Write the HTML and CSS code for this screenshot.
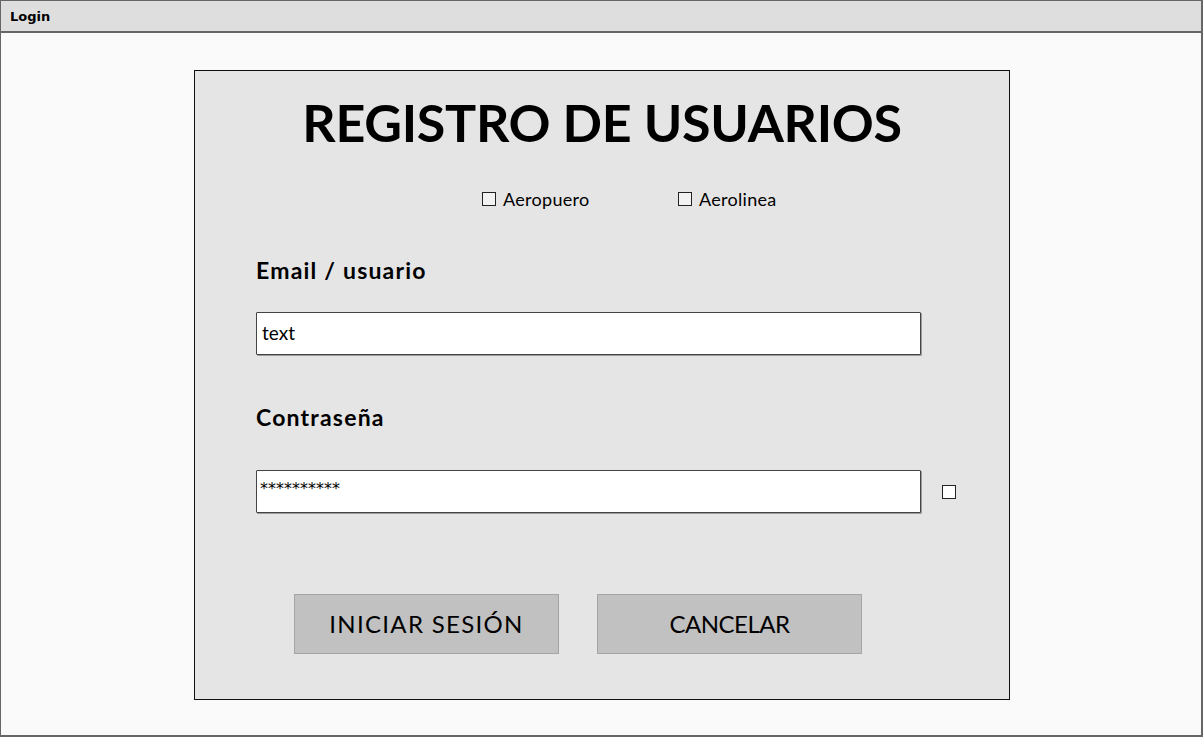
FILE: index.html
```html
<!DOCTYPE html>
<html lang="es">
<head>
<meta charset="utf-8">
<title>Login</title>
<link rel="stylesheet" href="styles.css">
</head>
<body>
<div class="window">
  <div class="titlebar">Login</div>
  <div class="content">
    <div class="panel">
      <h1 class="title">REGISTRO DE USUARIOS</h1>
      <div class="type-row">
        <div class="type-item"><span class="box"></span><span>Aeropuero</span></div>
        <div class="type-item"><span class="box"></span><span>Aerolinea</span></div>
      </div>
      <div class="label label-email">Email / usuario</div>
      <div class="field field-text">text</div>
      <div class="label label-pass">Contraseña</div>
      <div class="pass-row">
        <div class="field field-pass">**********</div>
        <span class="box box-show"></span>
      </div>
      <div class="buttons">
        <div class="btn btn-login">INICIAR SESIÓN</div>
        <div class="btn btn-cancel">CANCELAR</div>
      </div>
    </div>
  </div>
</div>
</body>
</html>
```

FILE: styles.css
```css
* { box-sizing: border-box; }
html, body { margin: 0; padding: 0; }
body {
  font-family: Lato, "Open Sans", "DejaVu Sans", sans-serif;
  color: #000;
  background: #fafafa;
}
.window {
  width: 1203px;
  height: 737px;
  border: 1px solid #666;
  border-right-width: 2px;
  border-bottom-width: 2px;
  background: #fafafa;
  display: flex;
  flex-direction: column;
}
.titlebar {
  height: 32px;
  background: #dedede;
  border-bottom: 2px solid #666;
  font-family: "DejaVu Sans", sans-serif;
  font-weight: bold;
  font-size: 13px;
  line-height: 32px;
  padding-left: 9px;
  flex: none;
}
.content {
  flex: 1;
  padding-top: 37px;
  padding-left: 193px;
}
.panel {
  width: 816px;
  height: 630px;
  border: 1px solid #111;
  background: #e5e5e5;
  padding: 21px 0 0 61px;
  display: flex;
  flex-direction: column;
}
.title {
  margin: 0 0 0 -61px;
  font-size: 52px;
  font-weight: 700;
  line-height: 60px;
  text-align: center;
  letter-spacing: -0.3px;
}
.type-row {
  display: flex;
  margin-top: 37px;
  padding-left: 226px;
  height: 20px;
  align-items: center;
}
.type-item {
  display: flex;
  align-items: center;
  gap: 7px;
  font-size: 18px;
  line-height: 20px;
  letter-spacing: 0.3px;
}
.type-item:first-child { width: 196px; }
.box {
  display: inline-block;
  width: 14px;
  height: 14px;
  border: 1px solid #222;
  background: #f2f2f2;
  flex: none;
}
.label {
  font-weight: bold;
  font-size: 23px;
  line-height: 30px;
  letter-spacing: 1.2px;
}
.label-email { margin-top: 46px; }
.label-pass { margin-top: 47px; }
.field {
  width: 665px;
  height: 43px;
  background: #fff;
  border: 1px solid #444;
  border-radius: 1px;
  box-shadow: 1px 1px 0 #9a9a9a;
  padding-left: 5px;
}
.field-text {
  margin-top: 27px;
  font-size: 19px;
  line-height: 40px;
}
.pass-row {
  margin-top: 38px;
  display: flex;
  align-items: center;
  gap: 21px;
}
.field-pass {
  font-family: "DejaVu Sans", sans-serif;
  font-size: 16px;
  line-height: 36px;
  padding-left: 3px;
}
.box-show { background: #fff; }
.buttons {
  display: flex;
  gap: 38px;
  margin-top: 81px;
  margin-left: 38px;
}
.btn {
  width: 265px;
  height: 60px;
  background: #c1c1c1;
  border: 1px solid #a5a5a5;
  font-size: 24px;
  line-height: 58px;
  text-align: center;
}
.btn-login { letter-spacing: 1.3px; }
.btn-cancel { letter-spacing: -0.5px; }
```
